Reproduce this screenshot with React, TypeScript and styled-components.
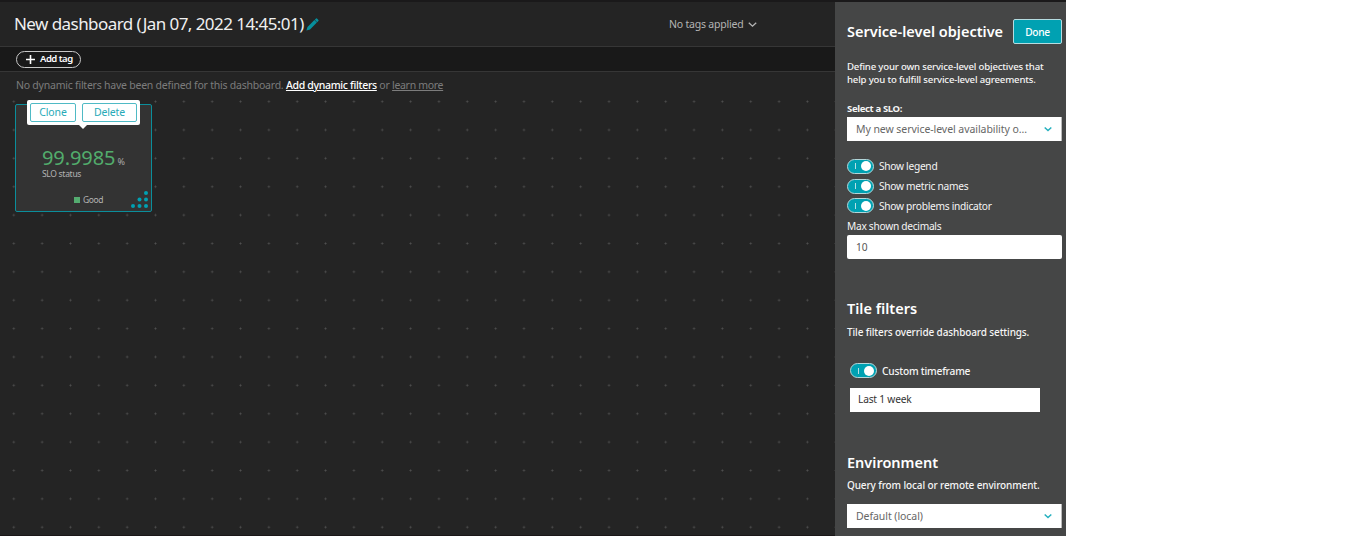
import React from "react";
import styled, { createGlobalStyle, css } from "styled-components";

const teal = "#00a1b2";

const Global = createGlobalStyle`
  * { box-sizing: border-box; }
  body { margin: 0; background: #fff; font-family: "Noto Sans", "Open Sans", sans-serif; }
  button, input { font-family: inherit; margin: 0; padding: 0; }
`;

const Page = styled.div`
  display: flex;
  width: 1066px;
  height: 536px;
  overflow: hidden;
  background: #242424;
  border-top: 2px solid #1a191a;
`;
const Main = styled.main`
  width: 835px;
  display: flex;
  flex-direction: column;
  border-bottom: 1px solid #1b1718;
`;
const Header = styled.header`
  display: flex;
  align-items: center;
  height: 45px;
  padding-left: 14px;
  border-bottom: 1px solid #363636;
`;
const Title = styled.h1`
  margin: 0;
  width: 292px;
  font-size: 17px;
  font-weight: 400;
  line-height: 24px;
  letter-spacing: -0.56px;
  white-space: nowrap;
  color: #f0f0f0;
`;
const TagMenu = styled.div`
  display: flex;
  align-items: center;
  gap: 4px;
  margin: 0 0 0 350px;
  font-size: 10.5px;
  letter-spacing: -0.2px;
  white-space: nowrap;
  color: #b4b4b4;
`;
const TagBar = styled.div`
  display: flex;
  align-items: center;
  height: 25px;
  padding-left: 16px;
  background: #191919;
  border-bottom: 1px solid #363636;
`;
const AddTag = styled.button`
  display: flex;
  align-items: center;
  gap: 5px;
  width: 65px;
  height: 17px;
  padding-left: 9px;
  border: 1px solid #c8c8c8;
  border-radius: 9px;
  background: #191919;
  color: #fff;
  font-size: 9.5px;
  font-weight: 600;
  line-height: 14px;
  letter-spacing: -0.5px;
  white-space: nowrap;
`;
const FilterNote = styled.p`
  margin: 0;
  height: 26px;
  padding: 5px 0 0 16px;
  font-size: 10.5px;
  line-height: 16px;
  letter-spacing: -0.23px;
  white-space: nowrap;
  color: #7c7c7c;
`;
const FilterLink = styled.a<{ $strong?: boolean }>`
  text-decoration: underline;
  text-underline-offset: 1px;
  letter-spacing: -0.32px;
  ${(p) => p.$strong && css`color: #fff; font-weight: 500;`}
`;
const Canvas = styled.section`
  flex: 1;
  padding: 6px 0 0 15px;
  background-image: radial-gradient(circle, #505050 0.7px, transparent 1.3px);
  background-size: 28.35px 28.38px;
  background-position: -0.4px -10.6px;
`;
const Tile = styled.article`
  position: relative;
  width: 137px;
  height: 108px;
  padding: 43px 0 0 26px;
  border: 1px solid #0b8e9b;
  border-radius: 2px;
  background: #333;
`;
const TileActions = styled.div`
  position: absolute;
  top: -5px;
  left: 11px;
  display: flex;
  gap: 6px;
  width: 113px;
  height: 25px;
  padding: 3px;
  border-radius: 2px;
  background: #fff;
  &::after {
    content: "";
    position: absolute;
    top: 24px;
    left: 51px;
    border: 5px solid transparent;
    border-top-color: #fff;
    border-bottom: 0;
  }
`;
const TileButton = styled.button<{ $width: number }>`
  width: ${(p) => p.$width}px;
  height: 19px;
  border: 1px solid #4fbac5;
  border-radius: 2px;
  background: #fff;
  color: #27aab8;
  font-size: 10.5px;
  letter-spacing: -0.15px;
  line-height: 15px;
`;
const Metric = styled.div`
  display: flex;
  align-items: baseline;
  gap: 2px;
  height: 20px;
  line-height: 20px;
  color: #52ac6c;
  font-size: 20px;
  letter-spacing: -0.08px;
`;
const Unit = styled.span`
  font-size: 9px;
  line-height: 10px;
  color: #aaa;
`;
const Caption = styled.div`
  font-size: 8.5px;
  line-height: 12px;
  letter-spacing: -0.3px;
  color: #b4b4b4;
`;
const Legend = styled.div`
  display: flex;
  align-items: center;
  gap: 3px;
  margin: 13px 0 0 32px;
  font-size: 8.5px;
  line-height: 13px;
  letter-spacing: -0.4px;
  color: #b4b4b4;
  &::before { content: ""; width: 6px; height: 6px; background: #54ac70; }
`;
const Grip = styled.svg`
  position: absolute;
  right: 3px;
  bottom: 3px;
`;
const Panel = styled.aside`
  width: 231px;
  padding: 17px 4px 0 12px;
  background: #454646;
  color: #f5f5f5;
`;
const PanelHead = styled.div`
  display: flex;
  align-items: flex-start;
  justify-content: space-between;
  height: 25px;
`;
const Heading = styled.h2<{ $top?: number }>`
  margin: ${(p) => p.$top ?? 0}px 0 0;
  font-size: 14.5px;
  font-weight: 600;
  line-height: 20px;
  white-space: nowrap;
  color: #fff;
`;
const Done = styled.button`
  width: 49px;
  height: 25px;
  border: 1px solid #b5dce0;
  border-radius: 2px;
  background: ${teal};
  color: #fff;
  font-size: 10.2px;
  font-weight: 500;
  letter-spacing: -0.3px;
`;
const Copy = styled.p<{ $top: number; $compact?: boolean }>`
  margin: ${(p) => p.$top}px 0 0;
  font-size: ${(p) => (p.$compact ? 9.6 : 10)}px;
  font-weight: 500;
  line-height: 12.5px;
  letter-spacing: ${(p) => (p.$compact ? -0.17 : -0.12)}px;
  white-space: nowrap;
`;
const FieldLabel = styled.div<{ $bold?: boolean; $top: number }>`
  margin-top: ${(p) => p.$top}px;
  font-size: ${(p) => (p.$bold ? 9.5 : 10.2)}px;
  font-weight: ${(p) => (p.$bold ? 700 : 400)};
  line-height: 14px;
  letter-spacing: ${(p) => (p.$bold ? -0.35 : -0.28)}px;
`;
const Select = styled.div<{ $top: number }>`
  display: flex;
  align-items: center;
  justify-content: space-between;
  width: 215px;
  height: 24px;
  margin-top: ${(p) => p.$top}px;
  padding: 0 9px 1px 9px;
  border-right: 1px solid #bbb;
  background: #fff;
  color: #666;
  font-size: 10.5px;
  letter-spacing: -0.06px;
  white-space: nowrap;
`;
const Input = styled.input<{ $width: number; $left?: number; $top: number; $dark?: boolean }>`
  display: block;
  width: ${(p) => p.$width}px;
  height: 24px;
  margin: ${(p) => p.$top}px 0 0 ${(p) => p.$left ?? 0}px;
  padding: 0 0 1px ${(p) => (p.$dark ? 8 : 9)}px;
  border: 0;
  border-radius: ${(p) => (p.$dark ? 0 : 2)}px;
  background: #fff;
  color: ${(p) => (p.$dark ? "#333" : "#555")};
  font-size: 10.2px;
  letter-spacing: -0.2px;
`;
const ToggleRow = styled.label<{ $top?: number; $left?: number; $height?: number; $strong?: boolean }>`
  display: flex;
  align-items: center;
  gap: 5px;
  height: ${(p) => p.$height ?? 20}px;
  margin: ${(p) => p.$top ?? 0}px 0 0 ${(p) => p.$left ?? 0}px;
  font-size: 10.2px;
  font-weight: ${(p) => (p.$strong ? 500 : 400)};
  letter-spacing: ${(p) => (p.$strong ? -0.2 : -0.28)}px;
  white-space: nowrap;
`;
const Switch = styled.span`
  display: flex;
  align-items: center;
  justify-content: space-between;
  width: 27px;
  height: 15px;
  padding: 0 2px 0 7px;
  border: 1px solid #b4d6d9;
  border-radius: 8px;
  background: ${teal};
  &::before { content: ""; width: 1px; height: 6px; background: #b5e0e5; }
  &::after { content: ""; width: 10px; height: 10px; border-radius: 50%; background: #fff; }
`;

const Chevron = ({ color, size, weight = 1.2 }: { color: string; size: number; weight?: number }) => (
  <svg width={size} height={size} viewBox="0 0 8 8" fill="none" stroke={color} strokeWidth={weight}>
    <path d="M.7 2.5 4 5.5 7.3 2.5" />
  </svg>
);

export default function App() {
  return (
    <>
      <Global />
      <Page>
        <Main>
          <Header>
            <Title>New dashboard (Jan 07, 2022 14:45:01)</Title>
            <svg width="13" height="13" viewBox="0 0 13 13" fill="#078f9c">
              <path d="M.4 12.5 1.5 9 8.4 2.1l2.5 2.5L4 11.5ZM8.8 1.8l1.2-1.2q.5-.5 1 0l1.4 1.4q.5.5 0 1l-1.2 1.2Z" />
            </svg>
            <TagMenu>
              No tags applied <Chevron color="#b4b4b4" size={9} />
            </TagMenu>
          </Header>
          <TagBar>
            <AddTag>
              <svg width="9" height="9" viewBox="0 0 9 9" stroke="#fff" strokeWidth="1.6">
                <path d="M4.5 0v9M0 4.5h9" />
              </svg>
              Add tag
            </AddTag>
          </TagBar>
          <FilterNote>
            No dynamic filters have been defined for this dashboard. <FilterLink $strong>Add dynamic filters</FilterLink> or{" "}
            <FilterLink>learn more</FilterLink>
          </FilterNote>
          <Canvas>
            <Tile>
              <TileActions>
                <TileButton $width={46}>Clone</TileButton>
                <TileButton $width={55}>Delete</TileButton>
              </TileActions>
              <Metric>
                99.9985<Unit>%</Unit>
              </Metric>
              <Caption>SLO status</Caption>
              <Legend>Good</Legend>
              <Grip width="17" height="17" viewBox="0 0 17 17" fill={teal}>
                <circle cx="15" cy="2" r="2" />
                <circle cx="8.5" cy="8.5" r="2" />
                <circle cx="15" cy="8.5" r="2" />
                <circle cx="2" cy="15" r="2" />
                <circle cx="8.5" cy="15" r="2" />
                <circle cx="15" cy="15" r="2" />
              </Grip>
            </Tile>
          </Canvas>
        </Main>
        <Panel>
          <PanelHead>
            <Heading $top={2}>Service-level objective</Heading>
            <Done>Done</Done>
          </PanelHead>
          <Copy $top={17} $compact>
            Define your own service-level objectives that
            <br />
            help you to fulfill service-level agreements.
          </Copy>
          <FieldLabel $bold $top={16}>Select a SLO:</FieldLabel>
          <Select $top={1}>
            My new service-level availability o... <Chevron color="#25b0be" size={8} weight={1.5} />
          </Select>
          <ToggleRow $top={15}><Switch />Show legend</ToggleRow>
          <ToggleRow><Switch />Show metric names</ToggleRow>
          <ToggleRow $height={19}><Switch />Show problems indicator</ToggleRow>
          <FieldLabel $top={4}>Max shown decimals</FieldLabel>
          <Input $width={215} $top={2} defaultValue="10" />
          <Heading $top={39}>Tile filters</Heading>
          <Copy $top={8}>Tile filters override dashboard settings.</Copy>
          <ToggleRow $top={22} $left={3} $strong><Switch />Custom timeframe</ToggleRow>
          <Input $width={190} $left={3} $top={7} $dark defaultValue="Last 1 week" />
          <Heading $top={40}>Environment</Heading>
          <Copy $top={7}>Query from local or remote environment.</Copy>
          <Select $top={13}>
            Default (local) <Chevron color="#25b0be" size={8} weight={1.5} />
          </Select>
        </Panel>
      </Page>
    </>
  );
}
